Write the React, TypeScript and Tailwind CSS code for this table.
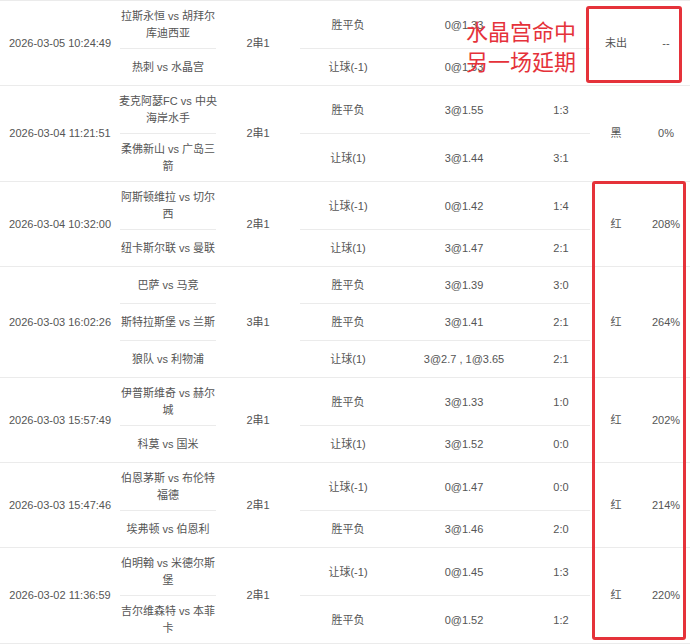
import React from 'react';

type Leg = {
  match: string[];
  play: string;
  bet: string;
  score: string;
};

type Order = {
  time: string;
  type: string;
  legs: Leg[];
  result: string;
  rate: string;
};

const orders: Order[] = [
  {
    time: '2026-03-05 10:24:49',
    type: '2串1',
    legs: [
      { match: ['拉斯永恒 vs 胡拜尔', '库迪西亚'], play: '胜平负', bet: '0@1.33', score: '' },
      { match: ['热刺 vs 水晶宫'], play: '让球(-1)', bet: '0@1.53', score: '' },
    ],
    result: '未出',
    rate: '--',
  },
  {
    time: '2026-03-04 11:21:51',
    type: '2串1',
    legs: [
      { match: ['麦克阿瑟FC vs 中央', '海岸水手'], play: '胜平负', bet: '3@1.55', score: '1:3' },
      { match: ['柔佛新山 vs 广岛三', '箭'], play: '让球(1)', bet: '3@1.44', score: '3:1' },
    ],
    result: '黑',
    rate: '0%',
  },
  {
    time: '2026-03-04 10:32:00',
    type: '2串1',
    legs: [
      { match: ['阿斯顿维拉 vs 切尔', '西'], play: '让球(-1)', bet: '0@1.42', score: '1:4' },
      { match: ['纽卡斯尔联 vs 曼联'], play: '让球(1)', bet: '3@1.47', score: '2:1' },
    ],
    result: '红',
    rate: '208%',
  },
  {
    time: '2026-03-03 16:02:26',
    type: '3串1',
    legs: [
      { match: ['巴萨 vs 马竞'], play: '胜平负', bet: '3@1.39', score: '3:0' },
      { match: ['斯特拉斯堡 vs 兰斯'], play: '胜平负', bet: '3@1.41', score: '2:1' },
      { match: ['狼队 vs 利物浦'], play: '让球(1)', bet: '3@2.7 , 1@3.65', score: '2:1' },
    ],
    result: '红',
    rate: '264%',
  },
  {
    time: '2026-03-03 15:57:49',
    type: '2串1',
    legs: [
      { match: ['伊普斯维奇 vs 赫尔', '城'], play: '胜平负', bet: '3@1.33', score: '1:0' },
      { match: ['科莫 vs 国米'], play: '让球(1)', bet: '3@1.52', score: '0:0' },
    ],
    result: '红',
    rate: '202%',
  },
  {
    time: '2026-03-03 15:47:46',
    type: '2串1',
    legs: [
      { match: ['伯恩茅斯 vs 布伦特', '福德'], play: '让球(-1)', bet: '0@1.47', score: '0:0' },
      { match: ['埃弗顿 vs 伯恩利'], play: '胜平负', bet: '3@1.46', score: '2:0' },
    ],
    result: '红',
    rate: '214%',
  },
  {
    time: '2026-03-02 11:36:59',
    type: '2串1',
    legs: [
      { match: ['伯明翰 vs 米德尔斯', '堡'], play: '让球(-1)', bet: '0@1.45', score: '1:3' },
      { match: ['吉尔维森特 vs 本菲', '卡'], play: '胜平负', bet: '0@1.52', score: '1:2' },
    ],
    result: '红',
    rate: '220%',
  },
];

const cell = 'flex items-center justify-center text-center border-b border-[#ebebeb]';
const sub = `${cell} min-h-[37px] pt-[7px] pb-[6px]`;

const OrderGroup: React.FC<{ order: Order }> = ({ order }) => {
  const span = order.legs.length === 3 ? 'row-span-3' : 'row-span-2';
  return (
    <div className="grid grid-cols-[120px_96px_84px_96px_136px_58px_52px_48px]">
      <div className={`${cell} ${span}`}>{order.time}</div>
      {order.legs.map((leg, i) => (
        <React.Fragment key={i}>
          <div className={sub}>
            <div className="whitespace-nowrap">
              {leg.match.map((line, j) => (
                <div key={j}>{line}</div>
              ))}
            </div>
          </div>
          {i === 0 && <div className={`${cell} ${span}`}>{order.type}</div>}
          <div className={sub}>{leg.play}</div>
          <div className={sub}>{leg.bet}</div>
          <div className={sub}>{leg.score}</div>
          {i === 0 && (
            <>
              <div className={`${cell} ${span}`}>{order.result}</div>
              <div className={`${cell} ${span}`}>{order.rate}</div>
            </>
          )}
        </React.Fragment>
      ))}
    </div>
  );
};

export default function App() {
  return (
    <div
      className="relative w-[690px] h-[644px] overflow-hidden bg-white text-[11px] leading-[17px] text-[#555]"
      style={{ fontFamily: '"Liberation Sans", "Noto Sans CJK SC", sans-serif' }}
    >
      <div className="border-t border-[#ebebeb]">
        {orders.map((o) => (
          <OrderGroup key={o.time} order={o} />
        ))}
      </div>

      {/* annotations */}
      <div className="absolute left-[466px] top-[18px] text-[22px] leading-[30px] text-[#e5323a]">
        <div>水晶宫命中</div>
        <div>另一场延期</div>
      </div>
      <div className="absolute left-[586px] top-[6px] w-[96px] h-[77px] border-[3px] border-[#e5323a] rounded-[3px]" />
      <div className="absolute left-[592px] top-[181px] w-[94px] h-[459px] border-[3px] border-[#e5323a] rounded-[3px]" />
    </div>
  );
}
